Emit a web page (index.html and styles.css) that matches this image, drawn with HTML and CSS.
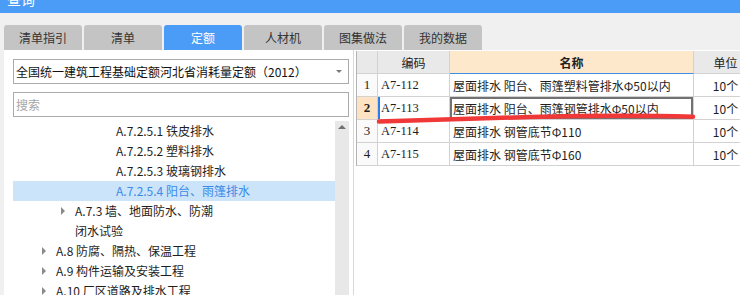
FILE: index.html
```html
<!DOCTYPE html>
<html lang="zh">
<head>
<meta charset="utf-8">
<title>查询</title>
<link rel="stylesheet" href="styles.css">
</head>
<body>
<div class="titlebar"><span class="title">查询</span></div>
<div class="tabs">
  <div class="tab">清单指引</div>
  <div class="tab">清单</div>
  <div class="tab active">定额</div>
  <div class="tab">人材机</div>
  <div class="tab">图集做法</div>
  <div class="tab">我的数据</div>
</div>
<div class="main">
  <div class="left">
    <div class="select"><span>全国统一建筑工程基础定额河北省消耗量定额（2012）</span><span class="caret"></span></div>
    <div class="search">搜索</div>
    <div class="tree">
      <ul class="tree-list">
        <li class="node l4"><span class="arrow"></span><span>A.7.2.5.1 铁皮排水</span></li>
        <li class="node l4"><span class="arrow"></span><span>A.7.2.5.2 塑料排水</span></li>
        <li class="node l4"><span class="arrow"></span><span>A.7.2.5.3 玻璃钢排水</span></li>
        <li class="node l4 selected"><span class="arrow"></span><span>A.7.2.5.4 阳台、雨篷排水</span></li>
        <li class="node l2 multi"><span class="arrow"><i class="tri"></i></span><span>A.7.3 墙、地面防水、防潮<br>闭水试验</span></li>
        <li class="node l1"><span class="arrow"><i class="tri"></i></span><span>A.8 防腐、隔热、保温工程</span></li>
        <li class="node l1"><span class="arrow"><i class="tri"></i></span><span>A.9 构件运输及安装工程</span></li>
        <li class="node l1"><span class="arrow"><i class="tri"></i></span><span>A.10 厂区道路及排水工程</span></li>
      </ul>
      <div class="scrollbar"><i class="up"></i></div>
    </div>
  </div>
  <div class="right">
    <div class="grid">
      <div class="hd"></div>
      <div class="hd">编码</div>
      <div class="hd name-hd">名称</div>
      <div class="hd">单位</div>

      <div class="num">1</div>
      <div class="code">A7-112</div>
      <div class="name">屋面排水 阳台、雨篷塑料管排水Φ50以内</div>
      <div class="unit">10个</div>

      <div class="num cur">2</div>
      <div class="code cur-code">A7-113</div>
      <div class="name cur-cell">屋面排水 阳台、雨篷钢管排水Φ50以内</div>
      <div class="unit">10个</div>

      <div class="num">3</div>
      <div class="code">A7-114</div>
      <div class="name">屋面排水 钢管底节Φ110</div>
      <div class="unit">10个</div>

      <div class="num">4</div>
      <div class="code">A7-115</div>
      <div class="name">屋面排水 钢管底节Φ160</div>
      <div class="unit">10个</div>
    </div>
  </div>
</div>
<svg class="mark" width="740" height="295" viewBox="0 0 740 295">
  <path d="M379,121.5 C420,120.5 470,118.5 530,117 C590,115.5 650,115.5 693,116.8" fill="none" stroke="#f03838" stroke-width="4.5" stroke-linecap="round"/>
</svg>
</body>
</html>
```
FILE: styles.css
```css
* { box-sizing: border-box; }
body {
  margin: 0;
  width: 740px;
  height: 295px;
  overflow: hidden;
  background: #f0f0f0;
  font-family: "Noto Sans CJK SC", "Microsoft YaHei", sans-serif;
  font-size: 12px;
  color: #1e1e1e;
}
.titlebar {
  height: 13px;
  background: #4b9cf6;
  overflow: hidden;
  color: #fff;
  padding-left: 7px;
}
.title {
  display: block;
  font-size: 14px;
  line-height: 14px;
  margin-top: -8px;
}
.tabs {
  display: flex;
  gap: 2px;
  padding: 12px 0 0 4px;
  height: 37px;
}
.tab {
  width: 78px;
  height: 25px;
  line-height: 25px;
  text-align: center;
  background: #c4c4c4;
  border-radius: 3px 3px 0 0;
  color: #333;
}
.tab.active {
  background: #4a9cf6;
  color: #fff;
}
.main {
  display: flex;
  height: 245px;
}
.left {
  width: 350px;
  margin-left: 4px;
  background: #fff;
  border-right: 1px solid #d8d8d8;
  padding: 9px 4px 0 9px;
  display: flex;
  flex-direction: column;
  overflow: hidden;
}
.select {
  flex: none;
  height: 25px;
  border: 1px solid #ababab;
  display: flex;
  align-items: center;
  justify-content: space-between;
  padding: 0 6px 0 2px;
  color: #111;
}
.caret {
  width: 0;
  height: 0;
  border-left: 3px solid transparent;
  border-right: 3px solid transparent;
  border-top: 3px solid #7a7a7a;
}
.search {
  flex: none;
  margin-top: 8px;
  height: 25px;
  border: 1px solid #ababab;
  padding-left: 2px;
  line-height: 23px;
  color: #a6a6a6;
}
.tree {
  margin-top: 4px;
  display: flex;
  flex: 1;
  min-height: 0;
}
.tree-list {
  flex: 1;
  list-style: none;
  margin: 0;
  padding: 0;
}
.node {
  display: flex;
  align-items: center;
  height: 20px;
  line-height: 20px;
  white-space: nowrap;
}
.node.multi {
  height: 40px;
  align-items: flex-start;
}
.node.multi .arrow { height: 20px; }
.l1 { padding-left: 29px; }
.l2 { padding-left: 48px; }
.l4 { padding-left: 89px; }
.arrow {
  width: 14px;
  flex: none;
  display: flex;
  align-items: center;
}
.tri {
  width: 0;
  height: 0;
  border-left: 4px solid #8a8a8a;
  border-top: 4px solid transparent;
  border-bottom: 4px solid transparent;
}
.selected {
  background: #cce4fa;
  color: #3a8ae6;
}
.scrollbar {
  width: 14px;
  background: #e8e8e8;
  display: flex;
  justify-content: center;
  padding-top: 4px;
}
.up {
  width: 0;
  height: 0;
  border-left: 4px solid transparent;
  border-right: 4px solid transparent;
  border-bottom: 4px solid #707070;
}
.right {
  flex: 1;
  background: #fff;
  padding-left: 2px;
  overflow: hidden;
}
.grid {
  display: grid;
  grid-template-columns: 21px 72px 244px 64px;
  grid-auto-rows: 23px;
  border-left: 1px solid #b4b4b4;
  margin-top: 1px;
  width: 402px;
}
.grid > div {
  border-right: 1px solid #d2d2d2;
  border-bottom: 1px solid #d2d2d2;
  display: flex;
  align-items: center;
  white-space: nowrap;
}
.hd {
  background: #e9e9e9;
  justify-content: center;
  color: #222;
}
.name-hd {
  background: #fde8cc;
  font-weight: bold;
  border-bottom-color: #3d8ee8 !important;
}
.num {
  justify-content: center;
  font-family: "Liberation Serif", serif;
  font-size: 13px;
  background: #fafafa;
}
.num.cur {
  background: #fde3c4;
  font-weight: bold;
}
.code {
  font-family: "Liberation Serif", serif;
  font-size: 12.5px;
  padding-left: 3px;
}
.cur-code {
  box-shadow: inset 2px 0 0 #2b7de9;
}
.name {
  padding-left: 3px;
}
.cur-cell {
  box-shadow: inset 0 0 0 2px #727272;
}
.unit {
  justify-content: center;
}
.mark {
  position: absolute;
  left: 0;
  top: 0;
  pointer-events: none;
}
```
